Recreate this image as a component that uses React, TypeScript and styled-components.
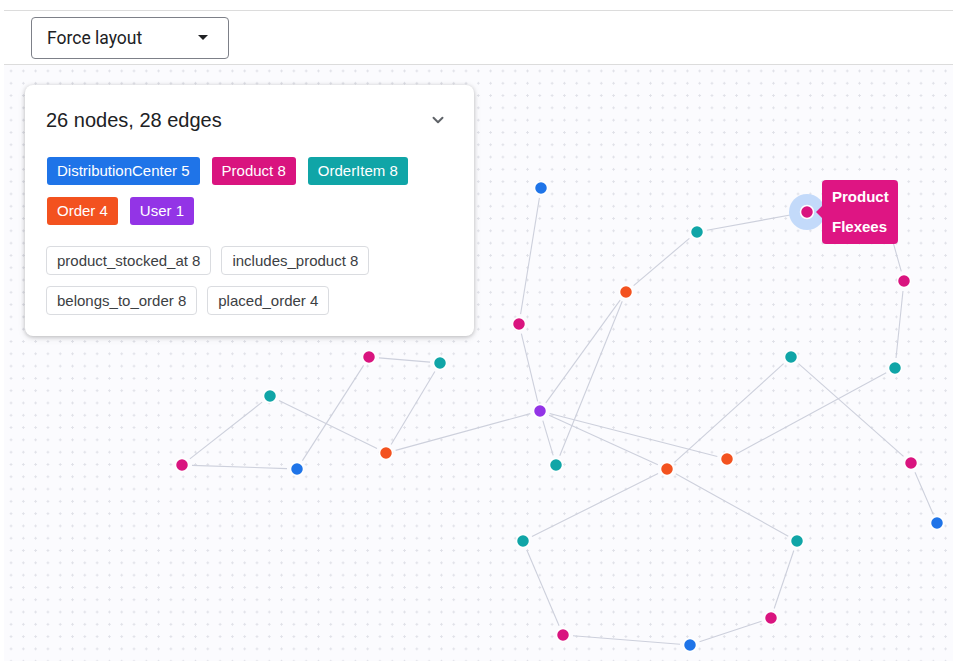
import styled, { createGlobalStyle } from 'styled-components'

const Global = createGlobalStyle`
  html, body {
    margin: 0;
    padding: 0;
    background: #fff;
    font-family: "Liberation Sans", Arial, sans-serif;
  }
`

type NodeKind = 'dc' | 'product' | 'item' | 'order' | 'user'

const COLORS: Record<NodeKind, string> = {
  dc: '#1f74e8',
  product: '#d9147f',
  item: '#10a5a7',
  order: '#f3521f',
  user: '#9334e6',
}

// canvas origin is at page (4, 65)
const OX = 4
const OY = 65

const nodes: { id: string; x: number; y: number; kind: NodeKind }[] = [
  { id: 'z', x: 884, y: 210, kind: 'dc' },
  { id: 'a', x: 541, y: 188, kind: 'dc' },
  { id: 'b', x: 697, y: 232, kind: 'item' },
  { id: 'c', x: 807, y: 212, kind: 'product' },
  { id: 'd', x: 904, y: 281, kind: 'product' },
  { id: 'e', x: 626, y: 292, kind: 'order' },
  { id: 'f', x: 519, y: 324, kind: 'product' },
  { id: 'g', x: 369, y: 357, kind: 'product' },
  { id: 'h', x: 440, y: 363, kind: 'item' },
  { id: 'i', x: 791, y: 357, kind: 'item' },
  { id: 'j', x: 895, y: 368, kind: 'item' },
  { id: 'k', x: 270, y: 396, kind: 'item' },
  { id: 'l', x: 540, y: 411, kind: 'user' },
  { id: 'm', x: 386, y: 453, kind: 'order' },
  { id: 'n', x: 556, y: 465, kind: 'item' },
  { id: 'o', x: 182, y: 465, kind: 'product' },
  { id: 'p', x: 297, y: 469, kind: 'dc' },
  { id: 'q', x: 667, y: 469, kind: 'order' },
  { id: 'r', x: 727, y: 459, kind: 'order' },
  { id: 's', x: 911, y: 463, kind: 'product' },
  { id: 't', x: 937, y: 523, kind: 'dc' },
  { id: 'u', x: 523, y: 541, kind: 'item' },
  { id: 'v', x: 797, y: 541, kind: 'item' },
  { id: 'w', x: 563, y: 635, kind: 'product' },
  { id: 'x', x: 690, y: 645, kind: 'dc' },
  { id: 'y', x: 771, y: 618, kind: 'product' },
]

const edges: [string, string][] = [
  ['f', 'a'], ['b', 'c'], ['e', 'b'], ['d', 'z'], ['d', 'j'], ['j', 'r'],
  ['i', 'q'], ['l', 'f'], ['l', 'e'], ['n', 'e'], ['l', 'n'], ['l', 'r'],
  ['l', 'q'], ['m', 'l'], ['h', 'g'], ['m', 'h'], ['g', 'p'], ['k', 'o'],
  ['k', 'm'], ['o', 'p'], ['q', 'u'], ['q', 'v'], ['u', 'w'], ['w', 'x'],
  ['x', 'y'], ['y', 'v'], ['s', 't'], ['i', 's'],
]

const byId = Object.fromEntries(nodes.map((n) => [n.id, n]))

function trimmed(a: string, b: string) {
  const p = byId[a]
  const q = byId[b]
  const dx = q.x - p.x
  const dy = q.y - p.y
  const len = Math.hypot(dx, dy)
  const ux = dx / len
  const uy = dy / len
  const gap = 10
  return {
    x1: p.x - OX + ux * gap,
    y1: p.y - OY + uy * gap,
    x2: q.x - OX - ux * gap,
    y2: q.y - OY - uy * gap,
  }
}

const nodeTags: { label: string; kind: NodeKind }[] = [
  { label: 'DistributionCenter 5', kind: 'dc' },
  { label: 'Product 8', kind: 'product' },
  { label: 'OrderItem 8', kind: 'item' },
  { label: 'Order 4', kind: 'order' },
  { label: 'User 1', kind: 'user' },
]

const edgeTags = ['product_stocked_at 8', 'includes_product 8', 'belongs_to_order 8', 'placed_order 4']

export default function App() {
  return (
    <>
      <Global />
      <Page>
        <Toolbar>
          <Select>
            <span>Force layout</span>
            <Caret />
          </Select>
        </Toolbar>
        <Canvas>
          <GraphSvg width="949" height="596">
            {edges.map(([a, b]) => {
              const l = trimmed(a, b)
              return <line key={a + b} {...l} stroke="#cdd0dc" strokeWidth="1.1" />
            })}
            <circle cx={807 - OX} cy={212 - OY} r="18" fill="#c3dafa" />
            {nodes.map((n) => (
              <circle
                key={n.id}
                cx={n.x - OX}
                cy={n.y - OY}
                r="6.5"
                fill={COLORS[n.kind]}
                stroke="#fff"
                strokeWidth="1.5"
              />
            ))}
          </GraphSvg>

          <Label>
            <span>Product</span>
            <span>Flexees</span>
          </Label>

          <Panel>
            <PanelHead>
              <Title>26 nodes, 28 edges</Title>
              <svg width="18" height="18" viewBox="0 0 24 24">
                <path d="M6 9l6 6 6-6" fill="none" stroke="#5f6368" strokeWidth="2.6" strokeLinecap="round" strokeLinejoin="round" />
              </svg>
            </PanelHead>
            <TagGroup>
              {nodeTags.map((t) => (
                <NodeTag key={t.label} $color={COLORS[t.kind]}>{t.label}</NodeTag>
              ))}
            </TagGroup>
            <EdgeGroup>
              {edgeTags.map((t) => (
                <EdgeTag key={t}>{t}</EdgeTag>
              ))}
            </EdgeGroup>
          </Panel>
        </Canvas>
      </Page>
    </>
  )
}

const Page = styled.div`
  padding-top: 10px;
  padding-left: 4px;
`

const Toolbar = styled.div`
  height: 53px;
  border-top: 1px solid #dcdcdc;
  border-bottom: 1px solid #dcdcdc;
  display: flex;
  align-items: center;
  padding-left: 27px;
  box-sizing: content-box;
`

const Select = styled.div`
  width: 198px;
  height: 42px;
  box-sizing: border-box;
  border: 1px solid #7d8088;
  border-radius: 4px;
  display: flex;
  align-items: center;
  justify-content: space-between;
  padding: 0 20px 0 15px;
  font-family: Roboto, "Liberation Sans", sans-serif;
  font-size: 17.5px;
  color: #202124;
`

const Caret = styled.div`
  width: 0;
  height: 0;
  border-left: 5px solid transparent;
  border-right: 5px solid transparent;
  border-top: 5px solid #202124;
`

const Canvas = styled.div`
  position: relative;
  height: 596px;
  overflow: hidden;
  background-color: #fbfbfe;
  background-image: radial-gradient(circle, #e0e1e8 1px, transparent 1.3px);
  background-size: 12.3px 12.3px;
  background-position: 0.9px -0.2px;
`

const GraphSvg = styled.svg`
  position: absolute;
  left: 0;
  top: 0;
`

const Label = styled.div`
  position: absolute;
  left: ${822 - OX}px;
  top: ${180 - OY}px;
  width: 76px;
  height: 64px;
  box-sizing: border-box;
  background: #de1583;
  border-radius: 4px;
  color: #fff;
  font-weight: 700;
  font-size: 15px;
  display: flex;
  flex-direction: column;
  justify-content: center;
  gap: 10px;
  padding-left: 10px;
  line-height: 20px;

  &::before {
    content: '';
    position: absolute;
    left: -6px;
    top: 26px;
    border-top: 6px solid transparent;
    border-bottom: 6px solid transparent;
    border-right: 6px solid #de1583;
  }
`

const Panel = styled.div`
  position: absolute;
  left: ${25 - OX}px;
  top: ${85 - OY}px;
  width: 449px;
  height: 251px;
  box-sizing: border-box;
  background: #fff;
  border-radius: 8px;
  box-shadow: 0 1px 4px rgba(0, 0, 0, 0.22), 0 2px 8px rgba(0, 0, 0, 0.08);
  padding: 22px 21px 0 21px;
`

const PanelHead = styled.div`
  display: flex;
  align-items: center;
  justify-content: space-between;
  padding-right: 6px;
  height: 26px;
`

const Title = styled.div`
  font-size: 20px;
  color: #202124;
`

const TagGroup = styled.div`
  display: flex;
  flex-wrap: wrap;
  gap: 12px;
  margin-top: 24px;
  padding-left: 1px;
`

const NodeTag = styled.div<{ $color: string }>`
  background: ${(p) => p.$color};
  color: #fff;
  font-size: 15px;
  height: 28px;
  line-height: 28px;
  padding: 0 10px;
  border-radius: 3px;
`

const EdgeGroup = styled.div`
  display: flex;
  flex-wrap: wrap;
  gap: 11px 10px;
  margin-top: 21px;
  width: 340px;
`

const EdgeTag = styled.div`
  border: 1px solid #dadce0;
  color: #3c4043;
  font-size: 15px;
  height: 29px;
  line-height: 27px;
  box-sizing: border-box;
  padding: 0 10px;
  border-radius: 4px;
`
